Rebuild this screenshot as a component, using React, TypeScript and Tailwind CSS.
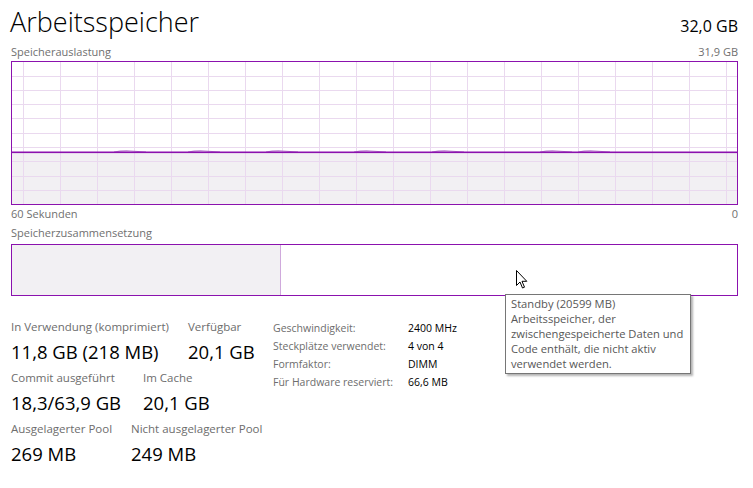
import React from 'react';

const PURPLE = '#8b12ae';

function UsageGraph() {
    const cols = Array.from({ length: 20 }, (_, k) => 11 + 37 * k);
    const rows = [14, 28, 42, 56, 71, 85, 99, 114, 128];
    const bumps = [102, 176, 254, 342, 420, 528, 566];

    return (
        <svg width="725" height="142" className="block">
            <rect x="0" y="90" width="725" height="52" fill="#f2f0f3" />
            {cols.map(x => (
                <rect key={x} x={x} y="0" width="1" height="142" fill="#ead9ef" />
            ))}
            {rows.map(y => (
                <rect key={y} x="0" y={y} width="725" height="1" fill="#ead9ef" />
            ))}
            {bumps.map(b => (
                <path
                    key={b}
                    d={`M${b} 90 Q${b + 8} 88.6 ${b + 16} 89 T${b + 32} 90`}
                    stroke="#b77fcc"
                    strokeWidth="1.2"
                    fill="none"
                />
            ))}
            <rect x="0" y="89.5" width="725" height="1.6" fill={PURPLE} />
        </svg>
    );
}

function Stat({ label, value, w }: { label: string; value: string; w?: string }) {
    return (
        <div className={`flex flex-col whitespace-nowrap ${w ?? ''}`}>
            <span className="text-[11.5px] leading-[16px] text-[#6d6d6d]">{label}</span>
            <span className="text-[18.5px] leading-[20px] mt-[7px] text-black">{value}</span>
        </div>
    );
}

function Cursor() {
    return (
        <svg width="13" height="21" viewBox="0 0 13 21" className="absolute left-[515px] top-[269px]">
            <path
                d="M1.5 1.5 L1.5 16.5 L5 13 L7.5 19 L9.5 18.2 L7 12.3 L11.8 12.3 Z"
                fill="#fff"
                stroke="#000"
                strokeWidth="1"
                strokeLinejoin="round"
            />
        </svg>
    );
}

export default function App() {
    return (
        <div className="relative w-[753px] h-[488px] bg-white overflow-hidden font-['Segoe_UI','Open_Sans',sans-serif]">
            <div className="w-[727px] ml-[11px] flex flex-col">

                <div className="h-[43px] flex items-end justify-between">
                    <h1 className="text-[27px] leading-[40px] font-light text-black -ml-[1px] mb-[1px]">Arbeitsspeicher</h1>
                    <span className="text-[16px] leading-[22px] text-black mb-[6px]">32,0 GB</span>
                </div>

                <div className="h-[18px] flex items-center justify-between text-[11px] text-[#707070]">
                    <span>Speicherauslastung</span>
                    <span>31,9 GB</span>
                </div>

                <div className="w-[727px] h-[144px] border border-[#8b12ae]">
                    <UsageGraph />
                </div>

                <div className="h-[18px] flex items-center justify-between text-[11px] text-[#707070]">
                    <span>60 Sekunden</span>
                    <span>0</span>
                </div>

                <div className="h-[21px] flex items-center text-[11px] text-[#707070] pb-[1px]">
                    <span>Speicherzusammensetzung</span>
                </div>

                <div className="w-[727px] h-[52px] border border-[#8b12ae] flex">
                    <div className="w-[269px] h-full bg-[#f2f0f3] border-r border-[#cfa9dc]" />
                    <div className="flex-1" />
                </div>

                <div className="flex items-start mt-[23px]">
                    <div className="w-[262px] flex flex-col gap-[8px]">
                        <div className="flex">
                            <Stat label="In Verwendung (komprimiert)" value="11,8 GB (218 MB)" w="w-[177px]" />
                            <Stat label="Verfügbar" value="20,1 GB" />
                        </div>
                        <div className="flex">
                            <Stat label="Commit ausgeführt" value="18,3/63,9 GB" w="w-[132px]" />
                            <Stat label="Im Cache" value="20,1 GB" />
                        </div>
                        <div className="flex">
                            <Stat label="Ausgelagerter Pool" value="269 MB" w="w-[120px]" />
                            <Stat label="Nicht ausgelagerter Pool" value="249 MB" />
                        </div>
                    </div>

                    <div className="grid grid-cols-[135px_auto] text-[10.5px] leading-[18px] whitespace-nowrap">
                        <span className="text-[#6d6d6d]">Geschwindigkeit:</span>
                        <span className="text-black">2400 MHz</span>
                        <span className="text-[#6d6d6d]">Steckplätze verwendet:</span>
                        <span className="text-black">4 von 4</span>
                        <span className="text-[#6d6d6d]">Formfaktor:</span>
                        <span className="text-black">DIMM</span>
                        <span className="text-[#6d6d6d]">Für Hardware reserviert:</span>
                        <span className="text-black">66,6 MB</span>
                    </div>
                </div>
            </div>

            <Cursor />

            <div className="absolute left-[505px] top-[294px] w-[186px] h-[80px] bg-white border border-[#767676] shadow-[2px_2px_2px_rgba(0,0,0,0.3)] pl-[5px] pt-[1px] text-[11.2px] leading-[15px] text-[#575757] whitespace-nowrap">
                Standby (20599 MB)<br />
                Arbeitsspeicher, der<br />
                zwischengespeicherte Daten und<br />
                Code enthält, die nicht aktiv<br />
                verwendet werden.
            </div>
        </div>
    );
}
